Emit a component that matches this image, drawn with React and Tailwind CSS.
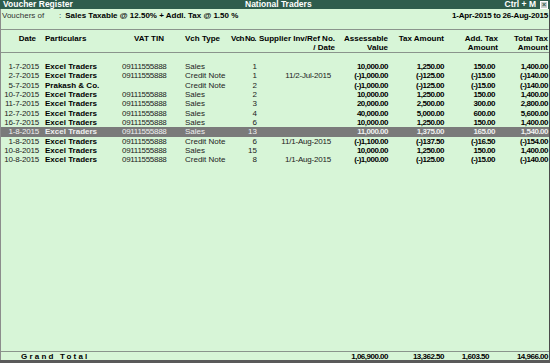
import React from "react";

const rows = [
  ["1-7-2015", "Excel Traders", "09111555888", "Sales", "1", "", "10,000.00", "1,250.00", "150.00", "1,400.00"],
  ["2-7-2015", "Excel Traders", "09111555888", "Credit Note", "1", "11/2-Jul-2015", "(-)1,000.00", "(-)125.00", "(-)15.00", "(-)140.00"],
  ["5-7-2015", "Prakash & Co.", "", "Credit Note", "2", "", "(-)1,000.00", "(-)125.00", "(-)15.00", "(-)140.00"],
  ["10-7-2015", "Excel Traders", "09111555888", "Sales", "2", "", "10,000.00", "1,250.00", "150.00", "1,400.00"],
  ["11-7-2015", "Excel Traders", "09111555888", "Sales", "3", "", "20,000.00", "2,500.00", "300.00", "2,800.00"],
  ["12-7-2015", "Excel Traders", "09111555888", "Sales", "4", "", "40,000.00", "5,000.00", "600.00", "5,600.00"],
  ["16-7-2015", "Excel Traders", "09111555888", "Sales", "6", "", "10,000.00", "1,250.00", "150.00", "1,400.00"],
  ["1-8-2015", "Excel Traders", "09111555888", "Sales", "13", "", "11,000.00", "1,375.00", "165.00", "1,540.00"],
  ["1-8-2015", "Excel Traders", "09111555888", "Credit Note", "6", "11/1-Aug-2015", "(-)1,100.00", "(-)137.50", "(-)16.50", "(-)154.00"],
  ["10-8-2015", "Excel Traders", "09111555888", "Sales", "15", "", "10,000.00", "1,250.00", "150.00", "1,400.00"],
  ["10-8-2015", "Excel Traders", "09111555888", "Credit Note", "8", "1/1-Aug-2015", "(-)1,000.00", "(-)125.00", "(-)15.00", "(-)140.00"],
];

const cols = "grid grid-cols-[40px_80px_62px_47px_29px_76px_54px_56px_54px_50px]";

const App = () => {
  return (
    <div className="w-[550px] h-[363px] flex flex-col bg-[#d7f5d7] text-[8px] text-black font-['Liberation_Sans',Arial,sans-serif] overflow-hidden select-none">
      {/* Title bar */}
      <div className="h-[9px] shrink-0 bg-[#2f5d4d] text-white font-bold text-[8.5px] leading-[9px] flex items-center relative">
        <span className="pl-[3px]">Voucher Register</span>
        <span className="absolute left-[245px]">National Traders</span>
        <span className="ml-auto mr-[4px]">Ctrl + M</span>
        <span className="w-[8px] h-[8px] mr-[2px] bg-[#c8d0cc] border border-white text-[#2f5d4d] text-[7px] leading-[6px] flex items-center justify-center">
          ×
        </span>
      </div>

      <div className="flex-1 flex flex-col border-l border-l-[#8c8c8c] border-r border-r-[#4a4a4a]">
        {/* Period info */}
        <div className="h-[13px] shrink-0 flex items-center leading-[9px]">
          <span className="pl-[1px] w-[58px] text-[#333]">Vouchers of</span>
          <span className="text-[#333]">:</span>
          <span className="pl-[4px] font-bold">Sales Taxable @ 12.50% + Addl. Tax @ 1.50 %</span>
          <span className="ml-auto pr-[1px] font-bold tracking-[-0.2px]">1-Apr-2015 to 26-Aug-2015</span>
        </div>
        <div className="h-[8px] shrink-0 border-b border-b-[#8a948c]" />

        {/* Column headers */}
        <div className={`${cols} pt-[4px] h-[23px] shrink-0 font-bold leading-[9px] border-b border-b-[#8a948c]`}>
          <div className="text-right pr-[5px]">Date</div>
          <div className="pl-[4px]">Particulars</div>
          <div className="pl-[13px] whitespace-nowrap">VAT TIN</div>
          <div className="pl-[2px] whitespace-nowrap">Vch Type</div>
          <div className="pl-[1px] whitespace-nowrap tracking-[-0.7px]">Vch No.</div>
          <div className="text-right whitespace-nowrap">
            Supplier Inv/Ref No.
            <br />/ Date
          </div>
          <div className="text-right pr-[1px]">
            Assessable
            <br />Value
          </div>
          <div className="text-right pr-[1px] whitespace-nowrap">Tax Amount</div>
          <div className="text-right pr-[1px]">
            Add. Tax
            <br />Amount
          </div>
          <div className="text-right pr-[1px]">
            Total Tax
            <br />Amount
          </div>
        </div>

        {/* Rows */}
        <div className="pt-[9px] shrink-0">
          {rows.map((r, i) => {
            const sel = i === 7;
            return (
              <div
                key={i}
                className={`${cols} h-[9.33px] leading-[9.33px] whitespace-nowrap ${sel ? "bg-[#7a7a7a] text-[#f0f0f0]" : ""}`}
              >
                <div className={`text-right pr-[2px] tracking-[-0.2px] ${sel ? "" : "text-[#222]"}`}>{r[0]}</div>
                <div className="pl-[4px] font-bold">{r[1]}</div>
                <div className={`pl-[1px] tracking-[-0.3px] ${sel ? "" : "text-[#222]"}`}>{r[2]}</div>
                <div className={`pl-[2px] ${sel ? "" : "text-[#222]"}`}>{r[3]}</div>
                <div className={`text-right pr-[2px] ${sel ? "" : "text-[#222]"}`}>{r[4]}</div>
                <div className={`text-right pr-[4px] tracking-[-0.2px] ${sel ? "" : "text-[#222]"}`}>{r[5]}</div>
                <div className="text-right pr-[1px] font-bold tracking-[-0.5px]">{r[6]}</div>
                <div className="text-right pr-[1px] font-bold tracking-[-0.5px]">{r[7]}</div>
                <div className="text-right pr-[4px] font-bold tracking-[-0.5px]">{r[8]}</div>
                <div className="text-right pr-[1px] font-bold tracking-[-0.5px]">{r[9]}</div>
              </div>
            );
          })}
        </div>

        <div className="flex-1" />

        {/* Grand total */}
        <div className={`${cols} h-[9px] shrink-0 border-t border-t-[#8a948c] font-bold leading-[9px] whitespace-nowrap`}>
          <div className="col-span-2 pl-[20px] tracking-[2.2px]">Grand Total</div>
          <div />
          <div />
          <div />
          <div />
          <div className="text-right pr-[1px] tracking-[-0.5px]">1,06,900.00</div>
          <div className="text-right pr-[1px] tracking-[-0.5px]">13,362.50</div>
          <div className="text-right pr-[10px] tracking-[-0.5px]">1,603.50</div>
          <div className="text-right pr-[1px] tracking-[-0.5px]">14,966.00</div>
        </div>
      </div>
      <div className="h-[3px] shrink-0 bg-[#5a5a5a]" />
    </div>
  );
};

export default App;
